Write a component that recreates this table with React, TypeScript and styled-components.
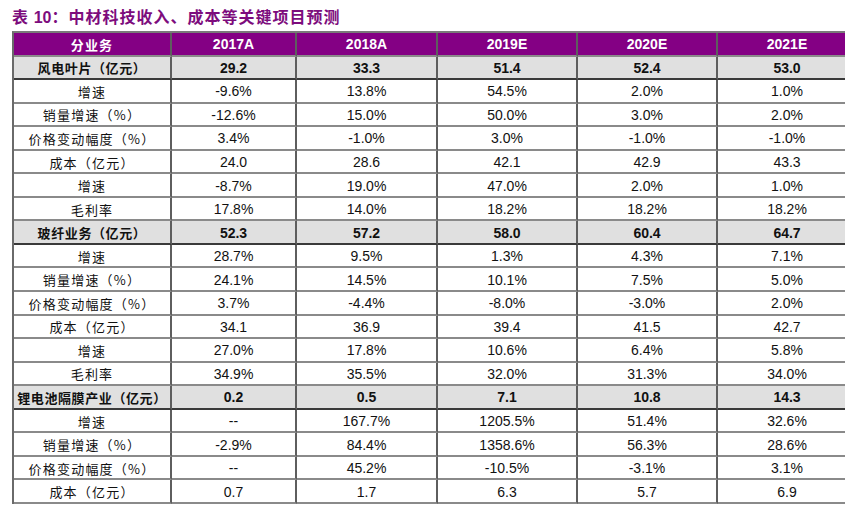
import { Fragment } from "react";
import styled, { createGlobalStyle } from "styled-components";

const GlobalStyle = createGlobalStyle`
    html, body {
        margin: 0;
        padding: 0;
        background: #ffffff;
        overflow: hidden;
    }
`;

type RowData = {
    label: string;
    values: string[];
    total?: boolean;
};

const years = ["2017A", "2018A", "2019E", "2020E", "2021E"];

const rows: RowData[] = [
    { label: "风电叶片（亿元）", values: ["29.2", "33.3", "51.4", "52.4", "53.0"], total: true },
    { label: "增速", values: ["-9.6%", "13.8%", "54.5%", "2.0%", "1.0%"] },
    { label: "销量增速（%）", values: ["-12.6%", "15.0%", "50.0%", "3.0%", "2.0%"] },
    { label: "价格变动幅度（%）", values: ["3.4%", "-1.0%", "3.0%", "-1.0%", "-1.0%"] },
    { label: "成本（亿元）", values: ["24.0", "28.6", "42.1", "42.9", "43.3"] },
    { label: "增速", values: ["-8.7%", "19.0%", "47.0%", "2.0%", "1.0%"] },
    { label: "毛利率", values: ["17.8%", "14.0%", "18.2%", "18.2%", "18.2%"] },
    { label: "玻纤业务（亿元）", values: ["52.3", "57.2", "58.0", "60.4", "64.7"], total: true },
    { label: "增速", values: ["28.7%", "9.5%", "1.3%", "4.3%", "7.1%"] },
    { label: "销量增速（%）", values: ["24.1%", "14.5%", "10.1%", "7.5%", "5.0%"] },
    { label: "价格变动幅度（%）", values: ["3.7%", "-4.4%", "-8.0%", "-3.0%", "2.0%"] },
    { label: "成本（亿元）", values: ["34.1", "36.9", "39.4", "41.5", "42.7"] },
    { label: "增速", values: ["27.0%", "17.8%", "10.6%", "6.4%", "5.8%"] },
    { label: "毛利率", values: ["34.9%", "35.5%", "32.0%", "31.3%", "34.0%"] },
    { label: "锂电池隔膜产业（亿元）", values: ["0.2", "0.5", "7.1", "10.8", "14.3"], total: true },
    { label: "增速", values: ["--", "167.7%", "1205.5%", "51.4%", "32.6%"] },
    { label: "销量增速（%）", values: ["-2.9%", "84.4%", "1358.6%", "56.3%", "28.6%"] },
    { label: "价格变动幅度（%）", values: ["--", "45.2%", "-10.5%", "-3.1%", "3.1%"] },
    { label: "成本（亿元）", values: ["0.7", "1.7", "6.3", "5.7", "6.9"] },
];

const Page = styled.div`
    padding: 7px 0 0 12px;
    width: 860px;
`;

const Title = styled.h1`
    margin: 0 0 5px 0;
    height: 19px;
    font-family: "Noto Sans CJK SC", sans-serif;
    font-size: 16px;
    line-height: 19px;
    font-weight: 700;
    color: #7d0c7d;
    letter-spacing: 1px;
    white-space: nowrap;
`;

const Num = styled.span`
    font-family: "Liberation Sans", Arial, sans-serif;
    letter-spacing: 0;
`;

const Table = styled.div`
    display: grid;
    grid-template-columns: 158px 125px 141px 140px 140px 140px;
    grid-auto-rows: 23.55px;
    width: 844px;
    border-top: 2px solid #7a7a7a;
    border-left: 2px solid #6a6a6a;
`;

const Cell = styled.div<{ $head?: boolean; $total?: boolean; $label?: boolean }>`
    display: flex;
    align-items: center;
    justify-content: center;
    box-sizing: border-box;
    border-right: 2px solid #5e5e5e;
    border-bottom: 2px solid ${p => (p.$total ? "#3a3a3a" : "#8a8a8a")};
    background: ${p => (p.$head ? "#840084" : p.$total ? "#e0e0e0" : "#ffffff")};
    color: ${p => (p.$head ? "#ffffff" : "#111111")};
    font-family: ${p => (p.$label ? `"Noto Sans CJK SC", sans-serif` : `"Liberation Sans", Arial, sans-serif`)};
    font-size: ${p => (p.$label ? "13px" : "14px")};
    font-weight: ${p => (p.$head || p.$total ? 700 : 400)};
    letter-spacing: ${p => (p.$label ? (p.$total ? "0.6px" : "1.2px") : "0")};
    white-space: nowrap;
    padding-top: 1px;
`;

export default function App() {
    return (
        <Page>
            <GlobalStyle />
            <Title>
                表 <Num>10</Num>：中材科技收入、成本等关键项目预测
            </Title>
            <Table>
                <Cell $head $label>分业务</Cell>
                {years.map(y => (
                    <Cell key={y} $head>{y}</Cell>
                ))}
                {rows.map((r, i) => (
                    <Fragment key={i}>
                        <Cell $label $total={r.total}>{r.label}</Cell>
                        {r.values.map((v, j) => (
                            <Cell key={j} $total={r.total}>{v}</Cell>
                        ))}
                    </Fragment>
                ))}
            </Table>
        </Page>
    );
}
